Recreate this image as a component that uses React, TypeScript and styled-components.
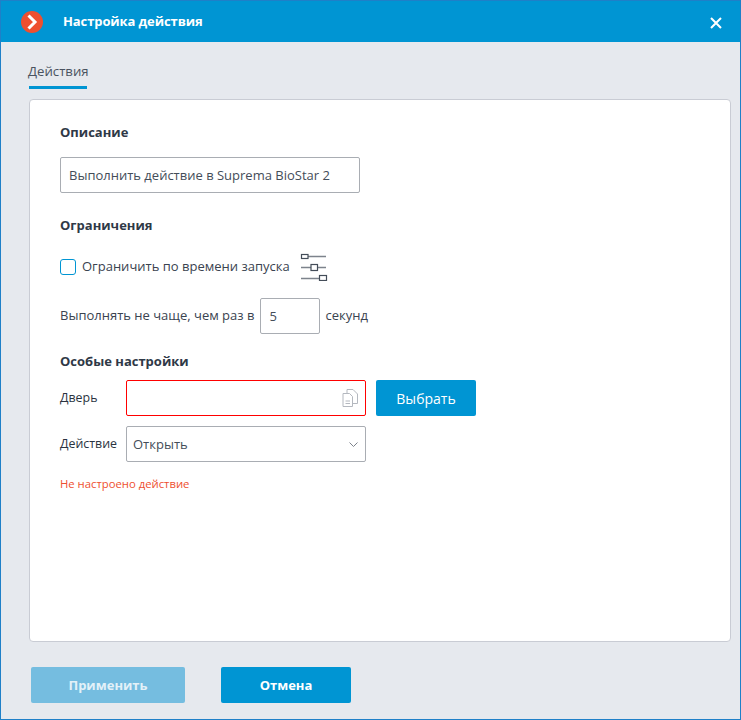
import React from "react";
import styled, { createGlobalStyle } from "styled-components";

const Global = createGlobalStyle`
  html, body { margin: 0; padding: 0; background: #e6e9ee; }
  * { box-sizing: border-box; }
`;

const Window = styled.div`
  width: 741px;
  height: 720px;
  display: flex;
  flex-direction: column;
  background: #e6e9ee;
  border: 1px solid #1f80c8;
  font-family: "Open Sans", "Noto Sans", sans-serif;
  font-size: 13px;
  color: #3a4350;
`;

const TitleBar = styled.header`
  height: 41px;
  flex: none;
  display: flex;
  align-items: center;
  background: #0095d3;
  color: #fff;
  padding: 0 0 0 20px;
`;

const Logo = styled.svg`
  flex: none;
  margin-top: 1px;
`;

const Title = styled.div`
  margin: 0 0 1px 20px;
  font-size: 13px;
  font-weight: 700;
  letter-spacing: -0.1px;
  flex: 1;
`;

const CloseBtn = styled.div`
  width: 50px;
  display: flex;
  justify-content: center;
  padding: 2px 0 0 2px;
`;

const Tabs = styled.nav`
  height: 57px;
  flex: none;
  padding: 19px 0 0 28px;
  display: flex;
`;

const Tab = styled.div`
  height: 28px;
  width: 58px;
  font-size: 13.2px;
  line-height: 20px;
  text-indent: -1px;
  color: #4a5360;
  white-space: nowrap;
  border-bottom: 3px solid #0095d3;
`;

const Card = styled.main`
  width: 702px;
  height: 543px;
  flex: none;
  margin-left: 28px;
  background: #fff;
  border: 1px solid #c9ccd4;
  border-radius: 4px;
  padding: 23px 30px 0 30px;
  display: flex;
  flex-direction: column;
`;

const SectionTitle = styled.h3<{ $mt?: number }>`
  margin: ${(p) => p.$mt ?? 0}px 0 0;
  font-size: 13px;
  line-height: 18px;
  font-weight: 700;
  color: #2f3947;
`;

const TextInput = styled.div<{ $w: number }>`
  width: ${(p) => p.$w}px;
  height: 36px;
  border: 1px solid #a9adb3;
  border-radius: 2px;
  padding: 0 8px;
  display: flex;
  align-items: center;
  font-size: 13px;
  color: #444d59;
  background: #fff;
  white-space: nowrap;
`;

const DescInput = styled(TextInput)`
  margin-top: 16px;
`;

const NumberInput = styled(TextInput)`
  margin-left: 1px;
`;

const Row = styled.div<{ $mt: number; $gap?: number }>`
  display: flex;
  align-items: center;
  margin-top: ${(p) => p.$mt}px;
  gap: ${(p) => p.$gap ?? 0}px;
  white-space: nowrap;
`;

const RowText = styled.span`
  margin-bottom: 2px;
`;

const Check = styled.span`
  width: 16px;
  height: 16px;
  flex: none;
  border: 1.5px solid #0095d3;
  border-radius: 3px;
  background: #fff;
  margin-right: 6px;
`;

const SliderIcon = styled.svg`
  margin-left: 10px;
  flex: none;
`;

const FieldLabel = styled.label`
  width: 66px;
  flex: none;
  font-size: 12.4px;
  color: #2a3340;
  margin-bottom: 2px;
`;

const PickerField = styled.div`
  width: 240px;
  height: 36px;
  border: 1px solid #f00;
  border-radius: 2px;
  display: flex;
  align-items: center;
  justify-content: flex-end;
  padding-right: 6px;
`;

const Select = styled.div`
  width: 240px;
  height: 36px;
  border: 1px solid #a9adb3;
  border-radius: 2px;
  display: flex;
  align-items: center;
  justify-content: space-between;
  padding: 0 7px 0 6px;
  font-size: 13px;
  color: #444d59;
`;

const PrimaryBtn = styled.button`
  width: 100px;
  height: 36px;
  margin-left: 10px;
  border: 0;
  border-radius: 2px;
  background: #0095d3;
  color: #fff;
  font: 400 14px "Open Sans", "Noto Sans", sans-serif;
`;

const ErrorText = styled.div`
  margin-top: 14px;
  font-size: 11.3px;
  line-height: 16px;
  color: #ee4f2f;
`;

const Footer = styled.footer`
  flex: 1;
  display: flex;
  padding: 25px 0 0 30px;
  gap: 36px;
`;

const FooterBtn = styled.button<{ $w: number; $disabled?: boolean }>`
  width: ${(p) => p.$w}px;
  height: 36px;
  border: 0;
  border-radius: 2px;
  background: ${(p) => (p.$disabled ? "#75bde0" : "#0095d3")};
  color: ${(p) => (p.$disabled ? "#e3f1f8" : "#fff")};
  font: 700 13px "Open Sans", "Noto Sans", sans-serif;
`;

export default function App() {
  return (
    <Window>
      <Global />
      <TitleBar>
        <Logo width="22" height="22" viewBox="0 0 22 22">
          <circle cx="11" cy="11" r="11" fill="#ee4f2f" />
          <path d="M7.5 4.5 L14 11 L7.5 17.5" fill="none" stroke="#fff" strokeWidth="3" />
        </Logo>
        <Title>Настройка действия</Title>
        <CloseBtn>
          <svg width="12" height="12" viewBox="0 0 12 12">
            <path d="M1 1 L11 11 M11 1 L1 11" stroke="#fff" strokeWidth="2" />
          </svg>
        </CloseBtn>
      </TitleBar>
      <Tabs>
        <Tab>Действия</Tab>
      </Tabs>
      <Card>
        <SectionTitle>Описание</SectionTitle>
        <DescInput $w={300}>Выполнить действие в Suprema BioStar 2</DescInput>
        <SectionTitle $mt={23}>Ограничения</SectionTitle>
        <Row $mt={19}>
          <Check />
          <RowText>Ограничить по времени запуска</RowText>
          <SliderIcon width="28" height="28" viewBox="0 0 28 28" fill="none">
            <path d="M8 3.5H26M1 14.5H11M17 14.5H26M1 25.5H19" stroke="#7d838c" strokeWidth="1.4" />
            <g stroke="#444d59" strokeWidth="1.2" fill="#fff">
              <rect x="1.5" y="1.5" width="6.5" height="4" />
              <rect x="11" y="11.5" width="6.5" height="6" />
              <rect x="19.5" y="22.5" width="7" height="5" />
            </g>
          </SliderIcon>
        </Row>
        <Row $mt={17} $gap={5}>
          <RowText>Выполнять не чаще, чем раз в</RowText>
          <NumberInput $w={60}>5</NumberInput>
          <RowText>секунд</RowText>
        </Row>
        <SectionTitle $mt={18}>Особые настройки</SectionTitle>
        <Row $mt={10}>
          <FieldLabel>Дверь</FieldLabel>
          <PickerField>
            <svg width="17" height="18" viewBox="0 0 17 18" fill="none" stroke="#b4b8bf">
              <path d="M1 4.5H7.5L10.5 7.5V17.5H1Z" />
              <path d="M5 4V.5H11L15.5 5V14.5H11" />
              <path d="M3.5 12H8M3.5 14.5H8" />
            </svg>
          </PickerField>
          <PrimaryBtn>Выбрать</PrimaryBtn>
        </Row>
        <Row $mt={10}>
          <FieldLabel>Действие</FieldLabel>
          <Select>
            <span>Открыть</span>
            <svg width="9" height="5" viewBox="0 0 9 5" fill="none">
              <path d="M.5 .5 L4.5 4.5 L8.5 .5" stroke="#7d838c" />
            </svg>
          </Select>
        </Row>
        <ErrorText>Не настроено действие</ErrorText>
      </Card>
      <Footer>
        <FooterBtn $w={154} $disabled>Применить</FooterBtn>
        <FooterBtn $w={130}>Отмена</FooterBtn>
      </Footer>
    </Window>
  );
}
